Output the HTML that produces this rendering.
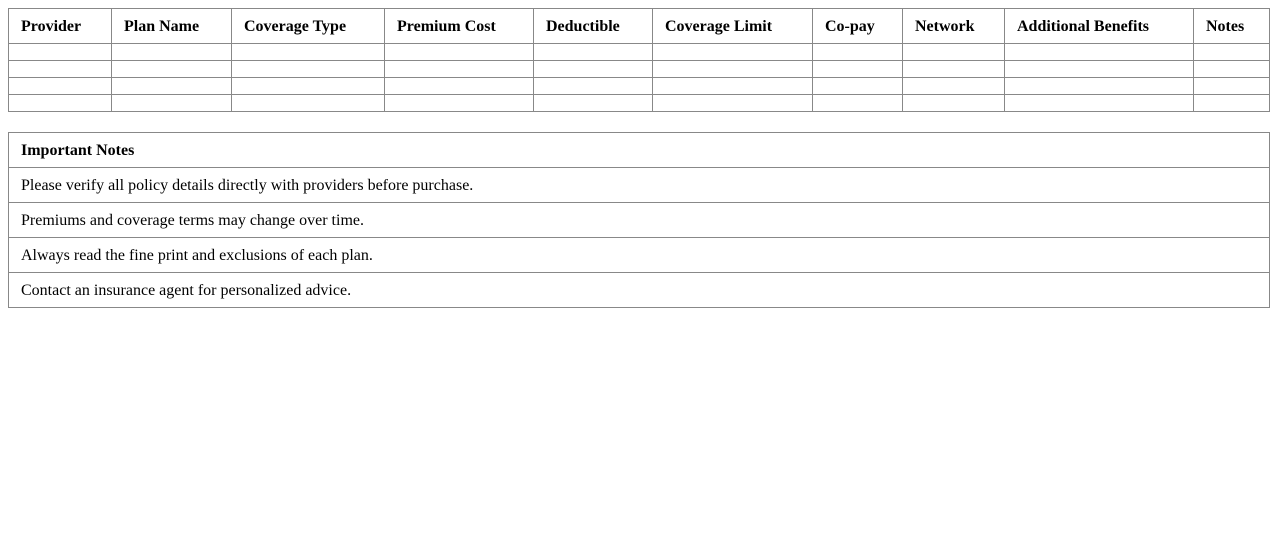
<!DOCTYPE html>
<html><head><meta charset="utf-8"><style>
body{margin:8px;font-family:"Liberation Serif","Times New Roman",serif;font-size:16px;color:#000;background:#fff}
table{border-collapse:collapse;width:1262px;table-layout:fixed}
td,th{border:1px solid #888;padding:9px 12px 7px;text-align:left;height:18px;line-height:18px}
th{font-weight:bold}
.e td{height:0;padding:8px 12px;line-height:0}
.n{margin-top:20px}
</style></head><body>
<table>
<colgroup><col style="width:103px"><col style="width:120px"><col style="width:153px"><col style="width:149px"><col style="width:119px"><col style="width:160px"><col style="width:90px"><col style="width:102px"><col style="width:189px"><col style="width:76px"></colgroup>
<tr><th>Provider</th><th>Plan Name</th><th>Coverage Type</th><th>Premium Cost</th><th>Deductible</th><th>Coverage Limit</th><th>Co-pay</th><th>Network</th><th>Additional Benefits</th><th>Notes</th></tr>
<tr class="e"><td></td><td></td><td></td><td></td><td></td><td></td><td></td><td></td><td></td><td></td></tr>
<tr class="e"><td></td><td></td><td></td><td></td><td></td><td></td><td></td><td></td><td></td><td></td></tr>
<tr class="e"><td></td><td></td><td></td><td></td><td></td><td></td><td></td><td></td><td></td><td></td></tr>
<tr class="e"><td></td><td></td><td></td><td></td><td></td><td></td><td></td><td></td><td></td><td></td></tr>
</table>
<table class="n">
<tr><th>Important Notes</th></tr>
<tr><td>Please verify all policy details directly with providers before purchase.</td></tr>
<tr><td>Premiums and coverage terms may change over time.</td></tr>
<tr><td>Always read the fine print and exclusions of each plan.</td></tr>
<tr><td>Contact an insurance agent for personalized advice.</td></tr>
</table>
</body></html>
